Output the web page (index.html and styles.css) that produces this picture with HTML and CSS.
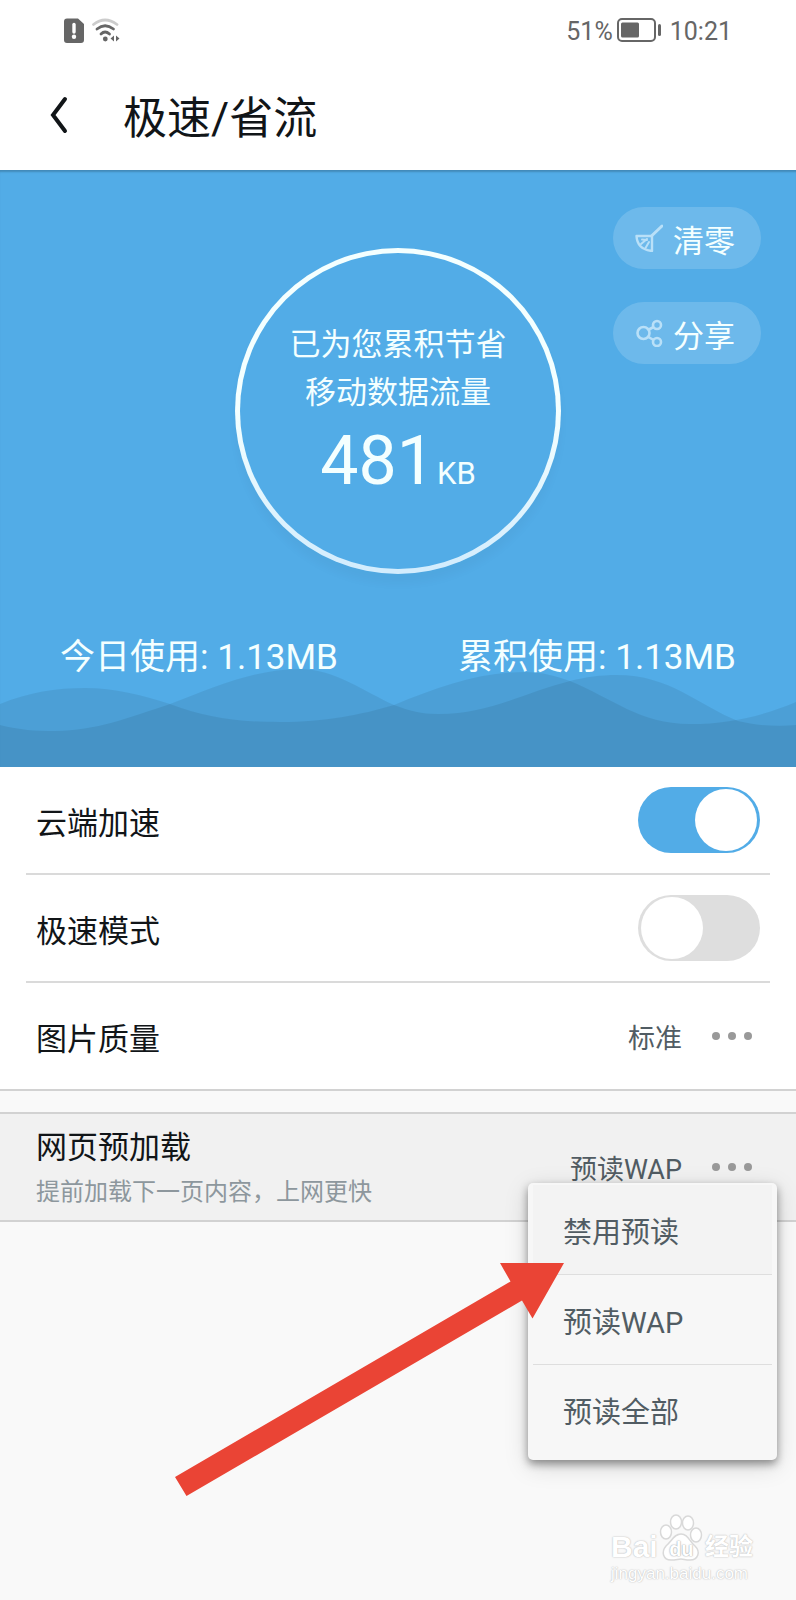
FILE: index.html
```
<!DOCTYPE html>
<html lang="zh-CN">
<head>
    <meta charset="UTF-8">
    <title>极速/省流</title>
    <meta name="viewport" content="width=device-width, initial-scale=1.0">
    <link rel="stylesheet" href="styles.css">
</head>
<body>

    <div class="page">
        <!-- 状态栏 -->
        <div class="status-bar">
            <div class="status-left">
                <svg width="20" height="25" viewBox="0 0 20 25" aria-hidden="true">
                    <path d="M3 0.500H14L20 6V22a3 3 0 0 1-3 3H3a3 3 0 0 1-3-3V3.500a3 3 0 0 1 3-3z" fill="#666"/>
                    <path d="M10 6.500v7.500" stroke="#fff" stroke-width="3.400" stroke-linecap="round"/>
                    <circle cx="10" cy="18.800" r="2.200" fill="#fff"/>
                </svg>
                <svg width="28" height="25" viewBox="0 0 28 25" fill="none" stroke-linecap="round" aria-hidden="true">
                    <path d="M1.500 6.500Q13 -2.500 25 6.500" stroke="#ccc" stroke-width="2.800"/>
                    <path d="M5 11Q13 4.500 21.500 11" stroke="#666" stroke-width="2.800"/>
                    <path d="M9 16Q13 12 17.500 16" stroke="#666" stroke-width="2.800"/>
                    <circle cx="13.300" cy="21" r="2.400" fill="#666"/>
                    <path d="M22 17.500v6l-3.500-3zM24 17.500v6l3.500-3z" fill="#666"/>
                </svg>
            </div>
            <div class="status-right">
                <span>51%</span>
                <svg width="45" height="24" viewBox="0 0 45 24" aria-hidden="true">
                    <rect x="1" y="1" width="37" height="22" rx="4" fill="none" stroke="#666" stroke-width="2"/>
                    <rect x="4" y="4.500" width="18" height="15" rx="1.500" fill="#666"/>
                    <rect x="41" y="6" width="3" height="12" rx="1.500" fill="#666"/>
                </svg>
                <span class="clock">10:21</span>
            </div>
        </div>

        <!-- 标题栏 -->
        <header class="title-bar">
            <button type="button" class="back" aria-label="返回">
                <svg width="18" height="38" viewBox="0 0 18 38" fill="none" stroke="#111518" stroke-width="4" stroke-linecap="round" aria-hidden="true">
                    <path d="M15 3L3 19L15 35"/>
                </svg>
            </button>
            <h1>极速/省流</h1>
        </header>

        <!-- 流量统计 -->
        <section class="hero">
            <svg class="waves" viewBox="0 0 796 106" preserveAspectRatio="none" aria-hidden="true">
                <path d="M0 64C20 69 36 70 55 70C95 70 130 56 170 43C215 26 255 8 300 8C335 8 365 31 394 44C410 50 422 53 438 53C490 53 525 31 570 20C586 16 600 14 617 14C670 14 698 44 738 60C755 64 775 66 796 64V106H0Z"/>
                <path d="M0 43C30 31 55 27 85 27C115 27 142 34 170 43C205 56 235 61 280 61C325 61 360 54 394 44C440 25 480 11 525 11C542 11 556 15 570 20C612 37 640 63 690 63C730 63 762 55 796 41V106H0Z"/>
            </svg>
            <div class="hero-top">
                <div class="ring">
                    <p>已为您累积节省</p>
                    <p>移动数据流量</p>
                    <div class="saved"><strong>481</strong><span>KB</span></div>
                </div>
                <div class="actions">
                    <button type="button" class="pill">
                        <svg width="28" height="28" viewBox="0 0 28 28" fill="none" stroke="currentColor" stroke-width="2" stroke-linecap="round" stroke-linejoin="round" aria-hidden="true">
                            <path d="M27 2L17 11.500" stroke-width="3"/>
                            <path d="M1.500 12H17V27C8 26 2 21 1.500 12z" stroke-width="2.400"/>
                            <path d="M12 15L6 20M14 18L10.500 24M7 15.500L12 16"/>
                        </svg>
                        清零
                    </button>
                    <button type="button" class="pill">
                        <svg width="28" height="28" viewBox="0 0 28 28" fill="none" stroke="currentColor" stroke-width="2.600" aria-hidden="true">
                            <circle cx="8.500" cy="14" r="6"/>
                            <circle cx="22" cy="6" r="4"/>
                            <circle cx="22" cy="23" r="4"/>
                            <path d="M14 10.500L18.500 8M13.500 18L18.500 21"/>
                        </svg>
                        分享
                    </button>
                </div>
            </div>
            <div class="usage">
                <p>今日使用: 1.13MB</p>
                <p>累积使用: 1.13MB</p>
            </div>
        </section>

        <!-- 设置项 -->
        <section class="group">
            <div class="row">
                <label for="cloud">云端加速</label>
                <input type="checkbox" class="switch" id="cloud" checked>
            </div>
            <div class="row">
                <label for="turbo">极速模式</label>
                <input type="checkbox" class="switch" id="turbo">
            </div>
            <div class="row">
                <span id="quality">图片质量</span>
                <button type="button" class="picker" aria-haspopup="true" aria-describedby="quality">
                    标准
                    <span class="dots"><i></i><i></i><i></i></span>
                </button>
            </div>
        </section>

        <section class="group preload">
            <div class="row">
                <div>
                    <h2 id="preload">网页预加载</h2>
                    <p class="hint">提前加载下一页内容，上网更快</p>
                </div>
                <button type="button" class="picker" aria-haspopup="true" aria-expanded="true" aria-describedby="preload">
                    预读WAP
                    <span class="dots"><i></i><i></i><i></i></span>
                </button>
            </div>
            <!-- 弹出菜单 -->
            <div class="menu" role="menu">
                <button type="button" role="menuitem" class="active">禁用预读</button>
                <button type="button" role="menuitem">预读WAP</button>
                <button type="button" role="menuitem">预读全部</button>
            </div>
            <!-- 指向「禁用预读」的箭头 -->
            <svg class="arrow" width="390" height="234" viewBox="0 0 390 234" aria-hidden="true">
                <path d="M389 0H325L335.500 18.500L0 214L11.500 233L347 37.500L357.500 55.500Z" fill="#ea4435"/>
            </svg>
        </section>

        <!-- 水印 -->
        <div class="watermark">
            <div class="brand">
                <span class="bai">Bai</span>
                <span class="paw">
                    <svg width="44" height="48" viewBox="0 0 44 48" fill="#fff" stroke="#d9d9d9" stroke-width="1.500" aria-hidden="true">
                        <ellipse cx="7" cy="18" rx="5.500" ry="7"/>
                        <ellipse cx="17" cy="8" rx="5.500" ry="7"/>
                        <ellipse cx="29" cy="9" rx="5.500" ry="7"/>
                        <ellipse cx="37" cy="21" rx="5.500" ry="7"/>
                        <path d="M22 20C29 20 30 27 36 32C42 38 39 46 31 46C26 46 25 45 22 45C19 45 17 46 12 46C4 46 2 38 7 32C13 27 15 20 22 20Z"/>
                    </svg>
                    <span class="du">du</span>
                </span>
                <span class="jy">经验</span>
            </div>
            <div class="site">jingyan.baidu.com</div>
        </div>
    </div>

</body>
</html>
```
FILE: styles.css
```
html, body {
  margin: 0; padding: 0;
}
body {
  font-family: Roboto, "Noto Sans CJK SC", sans-serif;
  color: #111518;
  background-color: #f9f9f9;
}
h1, h2, p { margin: 0; font-weight: normal; }
button { font-family: inherit; border: none; background: none; padding: 0; cursor: pointer; }
svg { display: block; }

.page { position: relative; min-height: 100vh; overflow: hidden; }

/* 状态栏 */
.status-bar { display: flex; justify-content: space-between; align-items: center; height: 60px; padding: 0 64px; background-color: #fff; }
.status-left { display: flex; gap: 8px; }
.status-right { display: flex; align-items: center; gap: 4px; font-size: 25px; line-height: 32px; color: #666; }
.status-right span { padding-top: 3px; }
.clock { margin-left: 4px; }

/* 标题栏 */
.title-bar { display: flex; align-items: center; gap: 55px; height: 110px; padding: 0 50px; box-sizing: border-box; background-color: #fff; }
.back { width: 18px; }
.title-bar h1 { padding-top: 8px; font-size: 44px; line-height: 64px; }

/* 流量统计 */
.hero { position: relative; padding-bottom: 85px; color: #f4ffff; background-color: #52ace7; box-shadow: inset 0 3px 2px -1px rgba(0,0,0,0.2); }
.waves { position: absolute; left: 0; bottom: 0; width: 100%; height: 106px; fill: rgba(0,0,0,0.07); }
.hero-top { display: grid; grid-template-columns: 1fr 326px 1fr; padding: 37px 35px 0; }
.ring {
  grid-column: 2;
  box-sizing: border-box;
  height: 326px;
  margin-top: 41px;
  padding-top: 68px;
  border: 5px solid transparent;
  border-radius: 50%;
  background: linear-gradient(#52ace7, #52ace7) padding-box, linear-gradient(#f4ffff 50%, #d2ecfd) border-box;
  box-shadow: 0 10px 10px rgba(0,0,0,0.03);
  text-align: center;
}
.ring p { font-size: 31px; line-height: 48px; }
.saved { display: flex; justify-content: center; align-items: baseline; gap: 2px; line-height: 88px; }
.saved strong { font-size: 68px; font-weight: normal; }
.saved span { font-size: 31px; }
.actions { grid-column: 3; display: flex; flex-direction: column; align-items: flex-end; gap: 33px; }
.pill { display: flex; align-items: center; box-sizing: border-box; gap: 10px; width: 148px; height: 62px; padding-left: 22px; border-radius: 31px; font-size: 31px; color: #f4ffff; background-color: rgba(255,255,255,0.16); }
.pill svg { color: #b9e0f8; }
.usage { position: relative; display: flex; margin-top: 60px; font-size: 35px; line-height: 48px; }
.usage p { flex: 1; text-align: center; }

/* 设置项 */
.group { padding: 0 26px; background-color: #fff; border-bottom: 2px solid #d2d2d2; }
.row { display: flex; justify-content: space-between; align-items: center; box-sizing: border-box; height: 108px; padding: 0 10px; border-bottom: 2px solid #dadada; font-size: 31px; }
.row:last-of-type { height: 106px; border-bottom: none; }
.switch { appearance: none; box-sizing: border-box; width: 122px; height: 66px; margin: 0; padding: 2px 3px; border-radius: 33px; background-color: #dedede; cursor: pointer; }
.switch::before { content: ""; display: block; width: 62px; height: 62px; border-radius: 50%; background-color: #fff; }
.switch:checked { background-color: #52ace7; }
.switch:checked::before { margin-left: auto; }
.picker { display: flex; align-items: center; gap: 30px; padding-right: 8px; font-size: 27px; color: #515c63; }
.dots { display: flex; gap: 8px; }
.dots i { width: 8px; height: 8px; border-radius: 50%; background-color: #999; }

.preload { position: relative; margin-top: 21px; border-top: 2px solid #d2d2d2; background-color: #f1f1f1; }
.preload .row { height: 106px; border-bottom: none; }
.preload h2 { padding-top: 6px; font-size: 31px; line-height: 44px; }
.hint { font-size: 24px; line-height: 44px; color: #8d979d; }

/* 弹出菜单 */
.menu { position: absolute; top: 69px; right: 19px; box-sizing: border-box; width: 249px; padding: 2px 5px 5px; border-radius: 5px; background-color: #f7f7f7; box-shadow: 0 4px 8px rgba(0,0,0,0.4), 0 6px 24px rgba(0,0,0,0.15); }
.menu button { display: block; width: 100%; height: 90px; padding: 0 30px; border-bottom: 1px solid #dedede; font-size: 29px; text-align: left; color: #515c63; }
.menu button:last-child { border-bottom: none; }
.menu .active { background-color: #f3f3f3; }
.arrow { position: absolute; top: 149px; right: 231px; }

/* 水印 */
.watermark { position: absolute; right: 43px; bottom: 14px; width: 142px; color: #fff; font-family: "Liberation Sans", "Noto Sans CJK SC", sans-serif; text-shadow: 0 0 1px #bbb, 0 0 2px #ccc; }
.brand { display: flex; align-items: flex-end; justify-content: space-between; font-weight: bold; line-height: 30px; }
.bai { font-size: 30px; }
.paw { position: relative; }
.du { position: absolute; left: 0; right: 0; bottom: 0; font-size: 20px; line-height: 26px; text-align: center; text-shadow: 0 0 1px #999, 0 0 2px #bbb; }
.jy { font-size: 24px; }
.site { font-size: 17px; line-height: 24px; }
```
